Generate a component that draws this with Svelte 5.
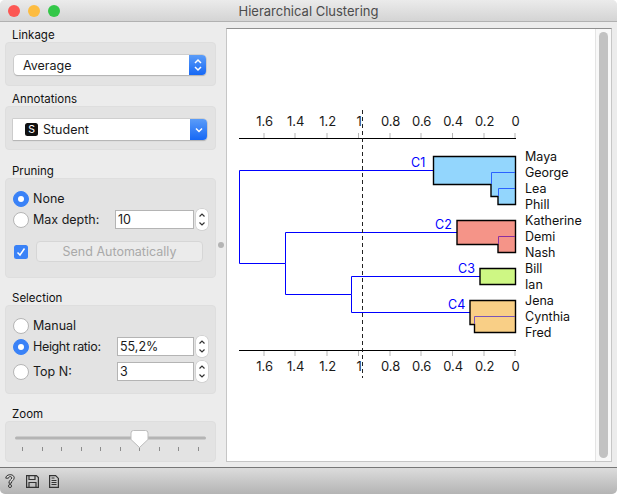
<script>
  const ticks = [
    { label: "1.6", x: 264 }, { label: "1.4", x: 295 }, { label: "1.2", x: 327 },
    { label: "1", x: 358.5 }, { label: "0.8", x: 390 }, { label: "0.6", x: 421 },
    { label: "0.4", x: 452.5 }, { label: "0.2", x: 484 }, { label: "0", x: 515 }
  ];
  const names = ["Maya", "George", "Lea", "Phill", "Katherine", "Demi", "Nash", "Bill", "Ian", "Jena", "Cynthia", "Fred"];
  const sliderTicks = [22, 42, 61, 81, 100, 120, 139, 159, 178, 198];

  const clusters = [
    { d: "M433.5 156.5H515.5V204.5H498V196.5H491V184.5H433.5Z", fill: "#93d6fd" },
    { d: "M457 220.5H515.5V252.5H498V244.5H457Z", fill: "#f59488" },
    { d: "M480 268.5H515.5V284.5H480Z", fill: "#cef784" },
    { d: "M470 300.5H515.5V332.5H474.5V324.5H470Z", fill: "#f9cf86" }
  ];
</script>

<div class="window">
  <header class="titlebar">
    <span class="lights">
      <i class="red"></i><i class="yellow"></i><i class="green"></i>
    </span>
    <span class="title">Hierarchical Clustering</span>
  </header>

  <div class="body">
    <aside class="sidebar">
      <h4>Linkage</h4>
      <section class="box linkage">
        <div class="combo">
          <span class="value">Average</span>
          <span class="arrows">
            <svg width="10" height="14" viewBox="0 0 10 14"><path d="M2 5l3-3 3 3M2 9l3 3 3-3" fill="none" stroke="#fff" stroke-width="1.5"/></svg>
          </span>
        </div>
      </section>

      <h4 class="gap-small">Annotations</h4>
      <section class="box annotations">
        <div class="combo square">
          <span class="badge">S</span>
          <span class="value">Student</span>
          <span class="arrows">
            <svg width="10" height="8" viewBox="0 0 10 8"><path d="M2 2.5l3 3 3-3" fill="none" stroke="#fff" stroke-width="1.5"/></svg>
          </span>
        </div>
      </section>

      <h4 class="gap-wide">Pruning</h4>
      <section class="box pruning">
        <label class="row"><span class="radio on"></span>None</label>
        <div class="row">
          <span class="radio"></span><span class="row-label">Max depth:</span>
          <span class="input">10</span>
          <span class="stepper"><svg width="8" height="19" viewBox="0 0 8 19"><path d="M1.5 6.5L4 4l2.5 2.5M1.5 12.5L4 15l2.5-2.5" fill="none" stroke="#333" stroke-width="1.2"/></svg></span>
        </div>
        <div class="send">
          <span class="check"><svg width="14" height="14" viewBox="0 0 14 14"><path d="M3.5 7.5l2.5 2.5 4.5-6.5" fill="none" stroke="#fff" stroke-width="1.5"/></svg></span>
          <button>Send Automatically</button>
        </div>
      </section>

      <h4 class="gap-mid">Selection</h4>
      <section class="box selection">
        <label class="row"><span class="radio"></span>Manual</label>
        <div class="row">
          <span class="radio on"></span><span class="row-label tight">Height ratio:</span>
          <span class="input">55,2%</span>
          <span class="stepper"><svg width="8" height="19" viewBox="0 0 8 19"><path d="M1.5 6.5L4 4l2.5 2.5M1.5 12.5L4 15l2.5-2.5" fill="none" stroke="#333" stroke-width="1.2"/></svg></span>
        </div>
        <div class="row">
          <span class="radio"></span><span class="row-label">Top N:</span>
          <span class="input">3</span>
          <span class="stepper"><svg width="8" height="19" viewBox="0 0 8 19"><path d="M1.5 6.5L4 4l2.5 2.5M1.5 12.5L4 15l2.5-2.5" fill="none" stroke="#333" stroke-width="1.2"/></svg></span>
        </div>
      </section>

      <h4 class="gap-mid">Zoom</h4>
      <section class="box zoom">
        <svg width="211" height="41" viewBox="0 0 211 41">
          <rect x="10" y="15.5" width="191" height="3" rx="1.5" fill="#b4b4b4"/>
          {#each sliderTicks as t}
            <line x1={t - 4.5} x2={t - 4.5} y1="26" y2="30" stroke="#8c8c8c"/>
          {/each}
          <path d="M128.5 9.5h12a2.5 2.5 0 0 1 2.5 2.5v6.5l-8.5 8-8.5-8V12a2.5 2.5 0 0 1 2.5-2.5Z" fill="#fff" stroke="#bdbdbd"/>
        </svg>
      </section>
    </aside>

    <div class="splitter"><i></i></div>

    <main class="canvas">
      <svg class="chart" width="368" height="432" viewBox="227 29 368 432">
        {#each ticks as t}
          <line x1={t.x} x2={t.x} y1="133" y2="138" stroke="#b5b5b5"/>
          <line x1={t.x} x2={t.x} y1="351" y2="356" stroke="#b5b5b5"/>
          <text x={t.x + 0.7} y="126" text-anchor="middle" class="tick">{t.label}</text>
          <text x={t.x + 0.7} y="371" text-anchor="middle" class="tick">{t.label}</text>
        {/each}
        <line x1="239" x2="516" y1="138.5" y2="138.5" stroke="#000"/>
        <line x1="239" x2="516" y1="350.5" y2="350.5" stroke="#000"/>

        <path d="M433.5 170.5H239.5V263.5H285.5V232.5H457M285.5 263.5V294.5H351.5V276.5H480M351.5 294.5V312.5H470" fill="none" stroke="#0000ff" stroke-width="1"/>

        {#each clusters as c}
          <path d={c.d} fill={c.fill} stroke="#000" stroke-width="1.4"/>
        {/each}
        <path d="M491.5 184V172.5H515M498.5 196V188.5H515" fill="none" stroke="#2a62ff"/>
        <path d="M498.5 244V236.5H515" fill="none" stroke="#8b2fa0"/>
        <path d="M474.5 324V316.5H515" fill="none" stroke="#7a55b8"/>

        <line x1="362.5" x2="362.5" y1="110" y2="378" stroke="#222" stroke-dasharray="4 3"/>

        <text x="411" y="167" class="cl">C1</text>
        <text x="435" y="229" class="cl">C2</text>
        <text x="458" y="273" class="cl">C3</text>
        <text x="448" y="309" class="cl">C4</text>

        {#each names as n, i}
          <text x="525" y={161 + i * 16} class="name">{n}</text>
        {/each}
      </svg>
      <div class="scroll"><i></i></div>
    </main>
  </div>

  <footer class="statusbar">
    <svg class="help" width="10" height="14" viewBox="0 0 10 14"><path d="M.8 4.2C.8-.4 9.2-.4 9.2 3.8c0 2.600-2.900 2.800-2.900 5.400H3.900c0-3.400 2.900-3.500 2.900-5.300 0-1.900-3.400-1.700-3.400.3Z" fill="#ddd" stroke="#333"/><circle cx="5" cy="12" r="1.5" fill="#ddd" stroke="#333"/></svg>
    <svg class="save" width="13" height="13" viewBox="0 0 13 13"><path d="M.6.6h9.800l2 2v9.800H.6Z" fill="none" stroke="#333" stroke-width="1.2"/><path d="M3 .6v3.900h6V.6M3 12.400V7.500h7v4.900" fill="none" stroke="#333" stroke-width="1.2"/></svg>
    <svg class="doc" width="10" height="13" viewBox="0 0 10 13"><path d="M.6.6h6l2.800 2.800v9H.6Z" fill="none" stroke="#333" stroke-width="1.2"/><path d="M2.5 5.5h5M2.5 7.5h5M2.5 9.5h5M2.5 3h3" fill="none" stroke="#333"/></svg>
  </footer>
</div>

<style>
  :global(body) {
    margin: 0;
    background: #fff;
  }
  .window {
    width: 617px;
    height: 494px;
    display: flex;
    flex-direction: column;
    background: #ececec;
    border-radius: 5px;
    overflow: hidden;
    font-family: Inter, "Liberation Sans", sans-serif;
    font-size: 12.5px;
    color: #1a1a1a;
  }

  .titlebar {
    position: relative;
    height: 21px;
    flex: none;
    display: flex;
    align-items: center;
    justify-content: center;
    background: linear-gradient(#ebebeb, #d4d4d4);
    border-bottom: 1px solid #b1b1b1;
  }
  .lights {
    position: absolute;
    left: 8px;
    top: 5px;
    display: flex;
    gap: 8px;
  }
  .lights i {
    width: 12px;
    height: 12px;
    border-radius: 50%;
  }
  .red { background: #fc5753; }
  .yellow { background: #fdbc40; }
  .green { background: #33c748; }
  .title {
    color: #4c4c4c;
    font-size: 13px;
  }

  .body {
    flex: 1;
    display: flex;
    min-height: 0;
  }
  .sidebar {
    width: 211px;
    flex: none;
    padding: 6px 0 0 5px;
    display: flex;
    flex-direction: column;
  }
  h4 {
    margin: 0;
    padding-left: 7px;
    height: 14px;
    line-height: 14px;
    font-size: 11.5px;
    font-weight: 400;
    color: #111;
  }
  .gap-small { margin-top: 6px; }
  .gap-wide { margin-top: 14px; }
  .gap-mid { margin-top: 13px; }

  .box {
    background: #e3e3e3;
    border: 1px solid #dedede;
    border-radius: 4px;
    box-sizing: border-box;
    flex: none;
  }
  .linkage, .annotations {
    height: 44px;
    padding-top: 12px;
  }

  .combo {
    display: flex;
    align-items: center;
    box-sizing: border-box;
    height: 20px;
    margin: 0 9px 0 8px;
    background: #fff;
    border-radius: 4px;
    box-shadow: 0 0 0 .5px #bbb, 0 1px 1px #aaa;
    overflow: hidden;
  }
  .combo .value { padding-left: 9px; flex: 1; }
  .combo.square {
    height: 21px;
    margin: 0 8px 0 7px;
    border-radius: 0 4px 4px 0;
  }
  .combo.square .value { padding-left: 5px; }
  .badge {
    margin-left: 12px;
    width: 13px;
    height: 13px;
    border-radius: 2.5px;
    background: #111;
    color: #fff;
    font-size: 10.5px;
    line-height: 13px;
    text-align: center;
  }
  .arrows {
    width: 17px;
    height: 100%;
    display: flex;
    align-items: center;
    justify-content: center;
    background: linear-gradient(#5b9cf8, #1668f5);
  }

  .pruning {
    height: 100px;
    padding: 9px 0 0 7px;
  }
  .selection {
    height: 89px;
    padding: 9px 0 0 7px;
  }
  .row {
    display: flex;
    align-items: center;
    height: 21px;
  }
  .selection .row:last-child { margin-top: 4px; }
  .radio {
    width: 16px;
    height: 16px;
    box-sizing: border-box;
    margin-right: 4px;
    flex: none;
    border-radius: 50%;
    background: #fff;
    border: 1px solid #b5b5b5;
  }
  .radio.on {
    background: #3a82f7;
    border-color: #3a82f7;
    position: relative;
  }
  .radio.on::after {
    content: "";
    position: absolute;
    left: 4px;
    top: 4px;
    width: 6px;
    height: 6px;
    border-radius: 50%;
    background: #fff;
  }
  .row-label { flex: 1; }
  .tight { letter-spacing: -.35px; }
  .input {
    width: 79px;
    height: 19px;
    box-sizing: border-box;
    background: #fff;
    border: 1px solid #b4b4b4;
    padding-left: 2px;
    line-height: 17px;
    flex: none;
  }
  .selection .input { width: 77px; }
  .stepper {
    width: 12px;
    height: 21px;
    margin: 0 7px 0 2px;
    flex: none;
    display: flex;
    align-items: center;
    justify-content: center;
    background: #fff;
    border-radius: 5px;
    box-shadow: 0 0 0 .5px #c4c4c4;
  }
  .send {
    display: flex;
    align-items: center;
    margin-top: 11px;
    padding-left: 1px;
  }
  .check {
    width: 14px;
    height: 14px;
    border-radius: 2.5px;
    background: #3a82f7;
    margin-right: 8px;
    display: flex;
  }
  button {
    width: 167px;
    height: 21px;
    padding: 0;
    font: inherit;
    color: #a9a9a9;
    background: #ebebeb;
    border: 1px solid #d6d6d6;
    border-radius: 4px;
  }
  .zoom {
    height: 41px;
    overflow: hidden;
  }
  .zoom svg {
    display: block;
    margin: -1px;
  }

  .splitter {
    width: 10px;
    flex: none;
    display: flex;
    align-items: center;
    justify-content: center;
  }
  .splitter i {
    width: 6px;
    height: 6px;
    border-radius: 50%;
    background: #b4b4b4;
  }

  .canvas {
    width: 386px;
    height: 434px;
    margin-top: 6px;
    box-sizing: border-box;
    flex: none;
    display: flex;
    background: #fff;
    border: 1px solid #c6c6c6;
    border-top-color: #8f8f8f;
  }
  .chart {
    display: block;
    flex: none;
  }
  .tick {
    font-size: 13px;
    fill: #1a1a1a;
  }
  .name {
    font-size: 12.5px;
    fill: #111;
  }
  .cl {
    font-size: 12.5px;
    fill: #0000ff;
  }
  .scroll {
    flex: 1;
    background: #f8f8f8;
    border-left: 1px solid #e4e4e4;
    padding: 3px;
    display: flex;
  }
  .scroll i {
    flex: 1;
    background: #c2c2c2;
    border-radius: 5px;
  }

  .statusbar {
    height: 27px;
    flex: none;
    box-sizing: border-box;
    border-top: 1px solid #777;
    background: linear-gradient(#dcdcdc, #b4b4b4);
    display: flex;
    align-items: center;
    padding-left: 5px;
  }
  .save { margin-left: 11px; }
  .doc { margin-left: 10px; }
</style>
